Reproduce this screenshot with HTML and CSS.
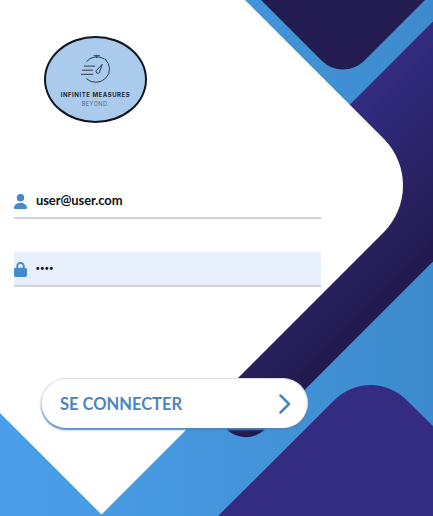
FILE: index.html
```
<!DOCTYPE html>
<html lang="fr">
<head>
<meta charset="utf-8">
<title>Connexion</title>
<link rel="stylesheet" href="styles.css">
</head>
<body>
<main class="screen">
  <svg class="backdrop" viewBox="0 0 433 516" aria-hidden="true">
    <defs>
      <linearGradient id="sky" x1="0" y1="0" x2="433" y2="0" gradientUnits="userSpaceOnUse">
        <stop offset="0" stop-color="#4b9fea"/><stop offset=".5" stop-color="#4495dc"/><stop offset="1" stop-color="#3d8bcc"/>
      </linearGradient>
      <linearGradient id="band" x1="350" y1="104" x2="470" y2="224" gradientUnits="userSpaceOnUse">
        <stop offset="0" stop-color="#332c82"/><stop offset="1" stop-color="#221a4c"/>
      </linearGradient>
    </defs>
    <rect width="433" height="516" fill="url(#sky)"/>
    <path d="M261 0L322 61A30 30 0 0 0 364 61L425 0Z" fill="#231c50"/>
    <path d="M433 21.500L226 228.500V429A28 28 0 0 0 265.500 429L433 261.500Z" fill="url(#band)"/>
    <path d="M218 516L334.500 400A51 51 0 0 1 406.500 400L433 426V516Z" fill="#332c80"/>
    <path d="M0 0H245L384 139A66.400 66.400 0 0 1 384 232L101.500 514.500L0 413Z" fill="#fff"/>
  </svg>
  <section class="login">
    <div class="logo">
      <svg class="logo-mark" viewBox="0 0 32 30" aria-hidden="true">
        <path d="M6 7A14 13.500 0 0 1 24.500 4M25.500 4.500A14 13.500 0 1 1 6 24.500M13.500 .7H20M16.700 .7V3M25 4L27 5.500M3.500 11.500H15M1.500 15.700H13M.5 20H13"/>
        <path d="M22.500 9.500L17.500 15A2 2 0 1 0 20 16.500Z"/>
      </svg>
      <span class="logo-name">INFINITE MEASURES</span>
      <span class="logo-tag">BEYOND.</span>
    </div>
    <form class="fields">
      <label class="field">
        <svg class="icon" viewBox="0 0 448 512" aria-hidden="true"><path d="M224 256A128 128 0 1 0 224 0a128 128 0 1 0 0 256zm-46 48C80 304 0 384 0 482c0 17 13 30 30 30h388c17 0 30-13 30-30 0-98-80-178-178-178z"/></svg>
        <span class="value">user@user.com</span>
      </label>
      <label class="field filled">
        <svg class="icon" viewBox="0 0 448 512" aria-hidden="true"><path d="M144 144v48h160v-48a80 80 0 0 0-160 0zM80 192v-48a144 144 0 0 1 288 0v48h16a64 64 0 0 1 64 64v192a64 64 0 0 1-64 64H64a64 64 0 0 1-64-64V256a64 64 0 0 1 64-64z"/></svg>
        <span class="value dots">••••</span>
      </label>
      <button class="submit" type="button">
        <span class="submit-text">SE CONNECTER</span>
        <svg class="chevron" viewBox="0 0 12 20" aria-hidden="true"><path d="M1.500 1.500L10 10L1.500 18.500"/></svg>
      </button>
    </form>
  </section>
</main>
</body>
</html>
```
FILE: styles.css
```
* { box-sizing: border-box; }
body { margin: 0; font-family: Lato, "Open Sans", sans-serif; }
.screen { position: relative; width: 433px; height: 516px; overflow: hidden; }
.backdrop { position: absolute; inset: 0; width: 433px; height: 516px; }
.login { position: relative; padding: 36px 0 0 14px; }
.logo {
  width: 103px; height: 87px; margin-left: 30px; padding-top: 17px;
  border: 2px solid #10151e; border-radius: 50%; background: #abcbed;
  display: flex; flex-direction: column; align-items: center;
  color: #1b2737; white-space: nowrap;
}
.logo-mark { width: 32px; height: 29px; flex: none; fill: none; stroke: #26384b; stroke-width: 1; }
.logo-name { margin-top: 7px; font: 700 6px/8px Inter, sans-serif; letter-spacing: .55px; }
.logo-tag { margin-top: 2px; font: 400 5.500px/7px Inter, sans-serif; letter-spacing: .5px; color: #53677e; }
.fields { width: 307px; margin-top: 61px; }
.field {
  display: flex; align-items: center; gap: 9px; height: 35px;
  padding-top: 1px; border-bottom: 2px solid #d2d2d6;
}
.filled { margin-top: 33px; background: #e7effd; }
.icon { width: 13px; height: 15px; fill: #438bca; }
.value { font-size: 13px; line-height: 16px; font-weight: 700; color: #111; letter-spacing: -.1px; margin-top: -2px; }
.dots { font-family: "Liberation Sans", sans-serif; font-size: 10px; letter-spacing: 1px; margin-top: -1px; }
.submit {
  display: flex; align-items: center; justify-content: space-between;
  width: 267px; height: 50px; margin: 91px 0 0 27px; padding: 0 16px 0 18px;
  border: 1px solid #dcdfe9; border-bottom-width: 0; border-radius: 26px; background: #fff;
  box-shadow: 0 2px 2px #4e86bd; color: #4b86bd;
  font: 700 16.500px/20px Lato, sans-serif;
}
.chevron { width: 12px; height: 20px; fill: none; stroke: #4b86b8; stroke-width: 2.500; stroke-linecap: round; stroke-linejoin: round; }
```
